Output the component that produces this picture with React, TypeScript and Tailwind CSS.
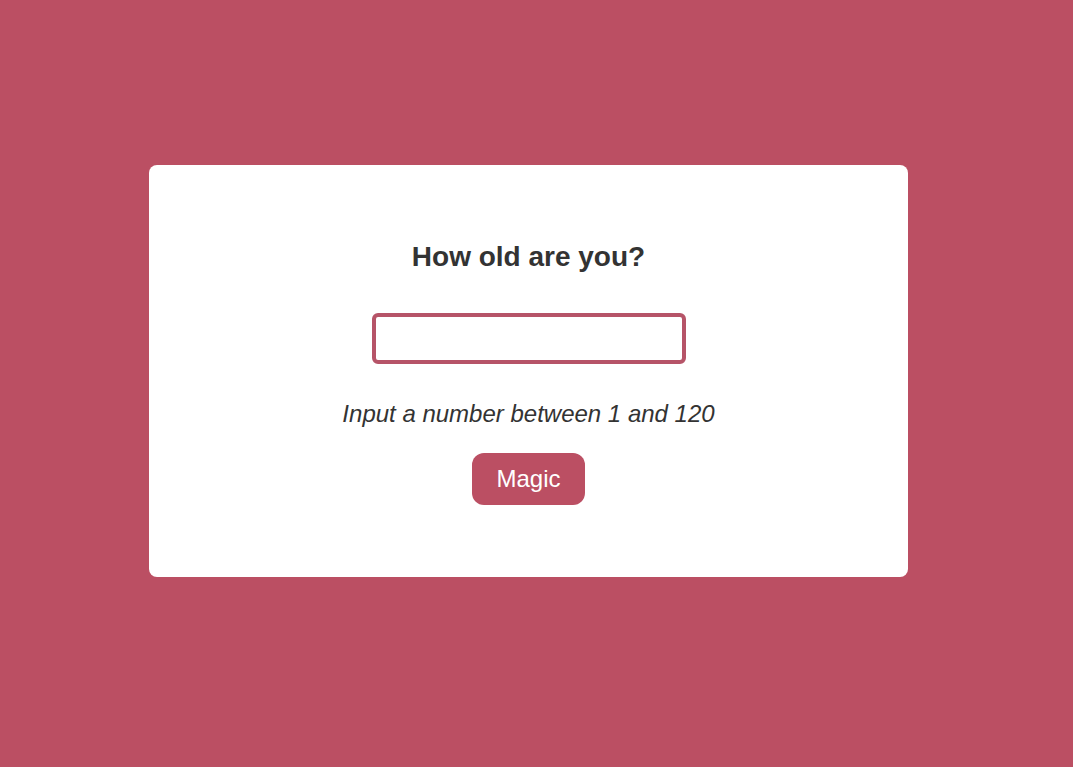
export default function App() {
  return (
    <div className="min-h-[767px] w-full bg-[#bb4f63] pt-[165px] pl-[149px] font-['Liberation_Sans',Arial,sans-serif]">
      <div className="flex w-[759px] flex-col items-center rounded-lg bg-white pt-[76px] pb-[72px]">
        <h1 className="h-[32px] text-[28px] leading-[32px] font-bold text-[#333333]">
          How old are you?
        </h1>
        <input
          type="text"
          className="mt-[40px] h-[51px] w-[314px] rounded-md border-4 border-[#b65468] bg-white outline-none"
        />
        <p className="mt-[36px] h-[28px] text-[24px] leading-[28px] text-[#333333] italic">
          Input a number between 1 and 120
        </p>
        <button className="mt-[25px] flex h-[52px] w-[113px] items-center justify-center rounded-xl bg-[#bb4f63] text-[24px] text-white">
          Magic
        </button>
      </div>
    </div>
  );
}
